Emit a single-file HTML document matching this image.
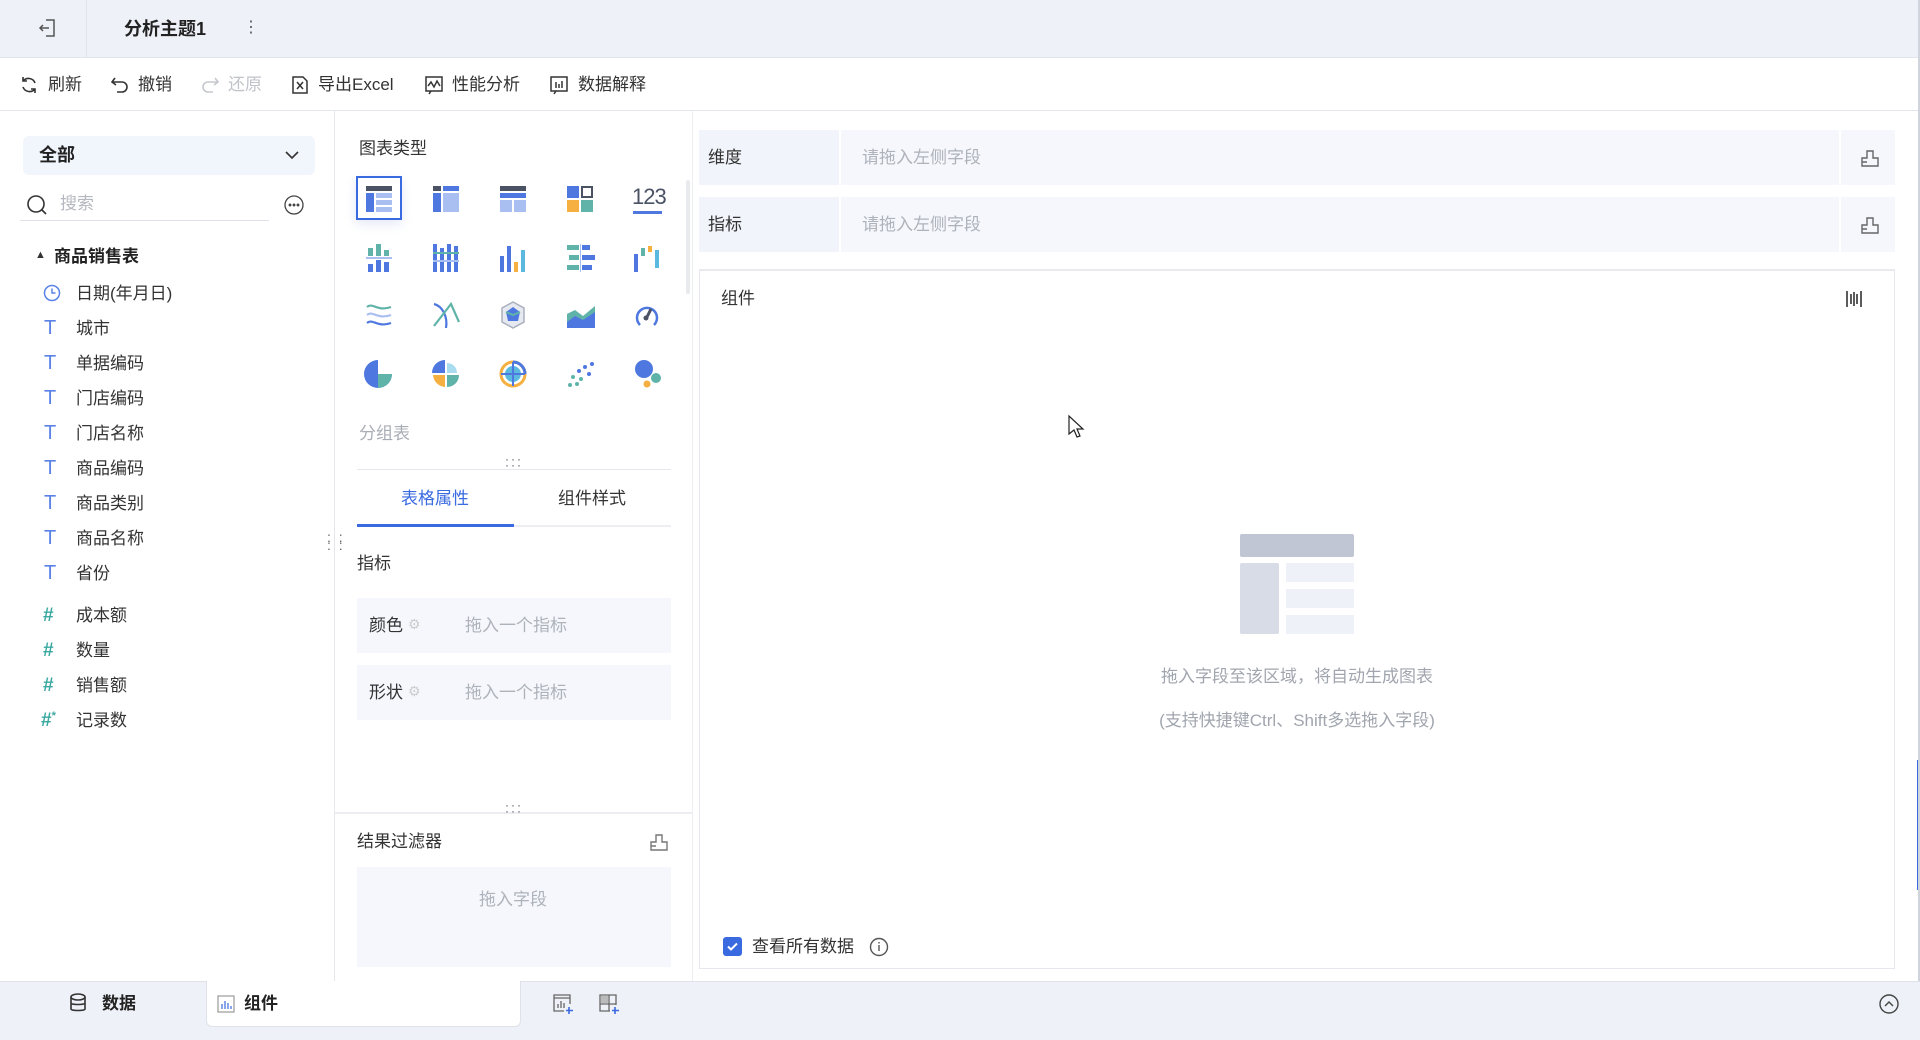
<!DOCTYPE html>
<html><head><meta charset="utf-8"><style>
*{margin:0;padding:0;box-sizing:border-box}
body{width:1920px;height:1040px;overflow:hidden;background:#fff;font-family:"Liberation Sans","Noto Sans CJK SC",sans-serif;color:#333;position:relative;font-size:17px}
.a{position:absolute}
.t{position:absolute;white-space:nowrap;line-height:1}
svg{position:absolute;overflow:visible}
</style></head><body>
<!-- top bar -->
<div class="a" style="left:0;top:0;width:1920px;height:58px;background:#eef1f8;border-bottom:1px solid #e2e5ec"></div>
<div class="a" style="left:86px;top:0;width:1px;height:58px;background:#e2e5ec"></div>
<svg style="left:38px;top:18px" width="20" height="20" viewBox="0 0 20 20" fill="none" stroke="#555" stroke-width="1.5"><path d="M8 2h8v16H8M11 10H2M5 7l-3 3 3 3"/></svg>
<div class="t" style="left:124px;top:20px;font-size:18px;font-weight:bold;color:#222">分析主题1</div>
<div class="t" style="left:243px;top:20px;font-size:16px;color:#555">⋮</div>
<!-- toolbar -->
<div class="a" style="left:0;top:110px;width:1920px;height:1px;background:#e3e6ec"></div>
<svg style="left:19px;top:75px" width="20" height="20" viewBox="0 0 20 20" fill="none" stroke="#333" stroke-width="1.6"><path d="M16 8A7 7 0 0 0 4 6M4 2v4h4M4 12a7 7 0 0 0 12 2M16 18v-4h-4"/></svg>
<div class="t" style="left:48px;top:76px;color:#333">刷新</div>
<svg style="left:110px;top:75px" width="20" height="20" viewBox="0 0 20 20" fill="none" stroke="#333" stroke-width="1.6"><path d="M5 3L2 7l4 3M2 7h10a5 5 0 0 1 0 10H7"/></svg>
<div class="t" style="left:138px;top:76px;color:#333">撤销</div>
<svg style="left:200px;top:75px" width="20" height="20" viewBox="0 0 20 20" fill="none" stroke="#c5c8ce" stroke-width="1.6"><path d="M15 3l3 4-4 3M18 7H8a5 5 0 0 0 0 10h5"/></svg>
<div class="t" style="left:228px;top:76px;color:#c0c3c9">还原</div>
<svg style="left:290px;top:75px" width="20" height="20" viewBox="0 0 20 20" fill="none" stroke="#333" stroke-width="1.5"><path d="M3 2h10l4 4v12H3zM7 7l6 7M13 7l-6 7"/></svg>
<div class="t" style="left:318px;top:76px;color:#333">导出Excel</div>
<svg style="left:424px;top:75px" width="20" height="20" viewBox="0 0 20 20" fill="none" stroke="#333" stroke-width="1.5"><path d="M2 2h16v14H2zM4 11l3-4 3 5 3-6 3 5M7 16l-2 3"/></svg>
<div class="t" style="left:452px;top:76px;color:#333">性能分析</div>
<svg style="left:549px;top:75px" width="20" height="20" viewBox="0 0 20 20" fill="none" stroke="#333" stroke-width="1.5"><path d="M2 2h16v14H2zM7 7v6M10 9v4M13 6v7M7 16l-2 3"/></svg>
<div class="t" style="left:578px;top:76px;color:#333">数据解释</div>

<!-- left panel -->
<div class="a" style="left:334px;top:111px;width:1px;height:870px;background:#e5e7ec"></div>
<div class="a" style="left:23px;top:136px;width:292px;height:39px;background:#f1f5fc;border-radius:6px"></div>
<div class="t" style="left:39px;top:146px;font-size:18px;font-weight:bold;color:#222">全部</div>
<svg style="left:284px;top:148px" width="16" height="14" viewBox="0 0 16 14" fill="none" stroke="#333" stroke-width="1.6"><path d="M2 4l6 6 6-6"/></svg>
<svg style="left:26px;top:194px" width="22" height="22" viewBox="0 0 22 22" fill="none" stroke="#333" stroke-width="1.6"><circle cx="10" cy="10" r="8"/><path d="M16 16l4 4"/></svg>
<div class="t" style="left:60px;top:195px;color:#b5b8bf">搜索</div>
<div class="a" style="left:20px;top:220px;width:249px;height:1px;background:#dfe2e8"></div>
<svg style="left:284px;top:195px" width="20" height="20" viewBox="0 0 20 20" fill="none" stroke="#444" stroke-width="1.3"><circle cx="10" cy="10" r="9"/><circle cx="6" cy="10" r=".8" fill="#444"/><circle cx="10" cy="10" r=".8" fill="#444"/><circle cx="14" cy="10" r=".8" fill="#444"/></svg>
<div class="t" style="left:35px;top:250px;font-size:11px;color:#333">▲</div>
<div class="t" style="left:54px;top:248px;font-weight:bold;color:#222">商品销售表</div>
<svg style="left:43px;top:284px" width="18" height="18" viewBox="0 0 18 18" fill="none" stroke="#5b82e6" stroke-width="1.5"><circle cx="9" cy="9" r="7.5"/><path d="M9 4.5V9h3.5"/></svg>
<div class="t" style="left:76px;top:285px;color:#333">日期(年月日)</div>
<div style="position:absolute;left:0;top:0;color:#333">
<div class="t" style="left:44px;top:318px;font-size:20px;color:#5b82e6">T</div><div class="t" style="left:76px;top:320px">城市</div>
<div class="t" style="left:44px;top:353px;font-size:20px;color:#5b82e6">T</div><div class="t" style="left:76px;top:355px">单据编码</div>
<div class="t" style="left:44px;top:388px;font-size:20px;color:#5b82e6">T</div><div class="t" style="left:76px;top:390px">门店编码</div>
<div class="t" style="left:44px;top:423px;font-size:20px;color:#5b82e6">T</div><div class="t" style="left:76px;top:425px">门店名称</div>
<div class="t" style="left:44px;top:458px;font-size:20px;color:#5b82e6">T</div><div class="t" style="left:76px;top:460px">商品编码</div>
<div class="t" style="left:44px;top:493px;font-size:20px;color:#5b82e6">T</div><div class="t" style="left:76px;top:495px">商品类别</div>
<div class="t" style="left:44px;top:528px;font-size:20px;color:#5b82e6">T</div><div class="t" style="left:76px;top:530px">商品名称</div>
<div class="t" style="left:44px;top:563px;font-size:20px;color:#5b82e6">T</div><div class="t" style="left:76px;top:565px">省份</div>
<div class="t" style="left:43px;top:606px;font-size:19px;font-weight:bold;color:#3aa8a0">#</div><div class="t" style="left:76px;top:607px">成本额</div>
<div class="t" style="left:43px;top:641px;font-size:19px;font-weight:bold;color:#3aa8a0">#</div><div class="t" style="left:76px;top:642px">数量</div>
<div class="t" style="left:43px;top:676px;font-size:19px;font-weight:bold;color:#3aa8a0">#</div><div class="t" style="left:76px;top:677px">销售额</div>
<div class="t" style="left:41px;top:711px;font-size:19px;font-weight:bold;color:#3aa8a0">#<span style="font-size:11px;vertical-align:top">*</span></div><div class="t" style="left:76px;top:712px">记录数</div>
</div>
<div class="t" style="left:327px;top:533px;font-size:14px;color:#666;letter-spacing:2px;line-height:.6">: :<br>: :</div>

<!-- middle -->
<div class="a" style="left:692px;top:111px;width:1px;height:870px;background:#eceef2"></div>
<div class="t" style="left:359px;top:140px;color:#333">图表类型</div>
<div class="a" style="left:356px;top:176px;width:46px;height:44px;border:2px solid #3a6ae0;box-shadow:0 4px 10px rgba(80,110,200,.15)"></div>
<div class="a" style="left:686px;top:180px;width:4px;height:114px;background:#e8eaee;border-radius:2px"></div>
<!-- row1 -->
<svg style="left:366px;top:186px" width="26" height="26" viewBox="0 0 26 26"><rect x="0" y="0" width="26" height="5" fill="#4a5264"/><rect x="0" y="7" width="8" height="19" fill="#4e78e0"/><rect x="10" y="7" width="16" height="5" fill="#a9bff2"/><rect x="10" y="14" width="16" height="5" fill="#a9bff2"/><rect x="10" y="21" width="16" height="5" fill="#a9bff2"/></svg>
<svg style="left:433px;top:186px" width="26" height="26" viewBox="0 0 26 26"><rect x="0" y="0" width="8" height="5" fill="#4a5264"/><rect x="10" y="0" width="16" height="5" fill="#4e78e0"/><rect x="0" y="7" width="8" height="19" fill="#4e78e0"/><rect x="10" y="7" width="16" height="19" fill="#a9bff2"/></svg>
<svg style="left:500px;top:186px" width="26" height="26" viewBox="0 0 26 26"><rect x="0" y="0" width="26" height="5" fill="#4a5264"/><rect x="0" y="7" width="26" height="5" fill="#4e78e0"/><rect x="0" y="14" width="12" height="12" fill="#a9bff2"/><rect x="14" y="14" width="12" height="12" fill="#a9bff2"/></svg>
<svg style="left:567px;top:186px" width="26" height="26" viewBox="0 0 26 26"><rect x="0" y="0" width="12" height="12" fill="#4e78e0"/><rect x="15" y="1" width="10" height="10" fill="none" stroke="#4a5264" stroke-width="2"/><rect x="0" y="14" width="12" height="12" fill="#f5b041"/><rect x="14" y="14" width="12" height="12" fill="#5fb3a8"/></svg>
<div class="t" style="left:632px;top:186px;font-size:22px;color:#4a5264;letter-spacing:-1px">123</div>
<div class="a" style="left:633px;top:211px;width:29px;height:3px;background:#4e78e0"></div>
<!-- row2 -->
<svg style="left:366px;top:244px" width="26" height="28" viewBox="0 0 26 28"><rect x="2" y="4" width="5" height="8" fill="#5fb3a8"/><rect x="10" y="0" width="5" height="12" fill="#5fb3a8"/><rect x="18" y="6" width="5" height="6" fill="#5fb3a8"/><rect x="0" y="13" width="26" height="2" fill="#a9bff2"/><rect x="2" y="20" width="5" height="8" fill="#4e78e0"/><rect x="10" y="16" width="5" height="12" fill="#4e78e0"/><rect x="18" y="18" width="5" height="10" fill="#4e78e0"/></svg>
<svg style="left:433px;top:244px" width="26" height="28" viewBox="0 0 26 28"><rect x="0" y="0" width="4" height="28" fill="#4e78e0"/><rect x="7" y="4" width="4" height="24" fill="#4e78e0"/><rect x="14" y="0" width="4" height="28" fill="#4e78e0"/><rect x="21" y="2" width="4" height="26" fill="#4e78e0"/><rect x="0" y="8" width="26" height="2" fill="#5fb3a8"/><rect x="0" y="16" width="26" height="2" fill="#a9bff2"/></svg>
<svg style="left:500px;top:244px" width="26" height="28" viewBox="0 0 26 28"><rect x="0" y="12" width="4" height="16" fill="#4e78e0"/><rect x="7" y="2" width="4" height="26" fill="#4e78e0"/><rect x="14" y="18" width="4" height="10" fill="#f5b041"/><rect x="21" y="6" width="4" height="22" fill="#5bb9e0"/></svg>
<svg style="left:567px;top:244px" width="28" height="28" viewBox="0 0 28 28"><rect x="0" y="1" width="12" height="5" fill="#5fb3a8"/><rect x="15" y="1" width="8" height="5" fill="#4e78e0"/><rect x="2" y="11" width="10" height="5" fill="#5fb3a8"/><rect x="15" y="11" width="13" height="5" fill="#4e78e0"/><rect x="0" y="21" width="12" height="5" fill="#5fb3a8"/><rect x="15" y="21" width="10" height="5" fill="#4e78e0"/><rect x="13" y="0" width="1" height="28" fill="#a9bff2"/></svg>
<svg style="left:634px;top:246px" width="26" height="26" viewBox="0 0 26 26"><rect x="0" y="8" width="4" height="18" fill="#4e78e0"/><rect x="7" y="2" width="4" height="8" fill="#5fb3a8"/><rect x="14" y="0" width="4" height="6" fill="#f5b041"/><rect x="21" y="4" width="4" height="18" fill="#5bb9e0"/></svg>
<!-- row3 -->
<svg style="left:366px;top:302px" width="26" height="26" viewBox="0 0 26 26" fill="none" stroke-width="2.2"><path d="M1 5c6-5 10 5 24 0" stroke="#5fb3a8"/><path d="M1 13c6-5 10 5 24 0" stroke="#a9bff2"/><path d="M1 21c6-5 10 5 24 0" stroke="#4e78e0"/></svg>
<svg style="left:433px;top:302px" width="28" height="26" viewBox="0 0 28 26" fill="none" stroke-width="2.2"><path d="M1 2c8 2 14 12 12 24" stroke="#4e78e0"/><path d="M1 24L18 2l8 18" stroke="#5fb3a8"/></svg>
<svg style="left:500px;top:301px" width="26" height="28" viewBox="0 0 26 28"><path d="M13 1l11 6v14l-11 6L2 21V7z" fill="#e6e9f0" stroke="#aab0bd" stroke-width="1.5"/><path d="M13 6l7 5-2 9H8L6 11z" fill="#4e78e0"/><path d="M6 11l7 3 7-3" stroke="#5fb3a8" stroke-width="2" fill="none"/></svg>
<svg style="left:567px;top:302px" width="28" height="26" viewBox="0 0 28 26"><path d="M0 12l8-4 8 6 12-10v22H0z" fill="#5fb3a8"/><path d="M0 20l8-6 8 4 12-8v16H0z" fill="#4e78e0"/></svg>
<svg style="left:634px;top:302px" width="26" height="26" viewBox="0 0 26 26" fill="none"><path d="M6 23A10 10 0 1 1 20 23" stroke="#4e78e0" stroke-width="2.5"/><path d="M17 7l-4 8" stroke="#4a5264" stroke-width="3"/><circle cx="12" cy="16" r="2.5" fill="#4a5264"/></svg>
<!-- row4 -->
<svg style="left:364px;top:360px" width="28" height="28" viewBox="0 0 28 28"><path d="M14 14V0A14 14 0 1 0 28 14z" fill="#4e78e0"/><path d="M14 14H28A14 14 0 0 1 14 28z" fill="#5fb3a8"/></svg>
<svg style="left:432px;top:360px" width="28" height="28" viewBox="0 0 28 28"><path d="M13 13V0A13 13 0 0 0 0 13z" fill="#4e78e0"/><path d="M15 13V3A10 10 0 0 1 25 13z" fill="#a9dcef"/><path d="M13 15v12A13 13 0 0 1 1 15z" fill="#f5b041"/><path d="M15 15h12A12 12 0 0 1 15 27z" fill="#5fb3a8"/></svg>
<svg style="left:499px;top:360px" width="28" height="28" viewBox="0 0 28 28" fill="none"><circle cx="14" cy="14" r="12" stroke="#f5b041" stroke-width="3"/><circle cx="14" cy="14" r="8" fill="#5bb9e0"/><path d="M14 2v24M2 14h24" stroke="#4e78e0" stroke-width="2"/><path d="M14 2A12 12 0 0 1 26 14" stroke="#4e78e0" stroke-width="3"/></svg>
<svg style="left:567px;top:362px" width="28" height="26" viewBox="0 0 28 26"><circle cx="25" cy="2" r="2" fill="#4e78e0"/><circle cx="18" cy="5" r="2" fill="#4e78e0"/><circle cx="12" cy="9" r="2" fill="#4e78e0"/><circle cx="22" cy="12" r="2" fill="#4e78e0"/><circle cx="14" cy="17" r="2" fill="#5fb3a8"/><circle cx="6" cy="15" r="2" fill="#5fb3a8"/><circle cx="3" cy="23" r="2" fill="#5fb3a8"/><circle cx="10" cy="22" r="2" fill="#5fb3a8"/></svg>
<svg style="left:634px;top:360px" width="28" height="30" viewBox="0 0 28 30"><circle cx="10" cy="9" r="9" fill="#4e78e0"/><circle cx="22" cy="18" r="5" fill="#5fb3a8"/><circle cx="13" cy="24" r="3.5" fill="#f5b041"/></svg>

<div class="t" style="left:359px;top:425px;color:#a9adb5">分组表</div>
<div class="t" style="left:505px;top:456px;font-size:12px;color:#555;letter-spacing:2px;line-height:.5">···<br>···</div>
<div class="a" style="left:357px;top:469px;width:314px;height:1px;background:#e5e7ec"></div>
<div class="t" style="left:401px;top:490px;color:#3a6ae0">表格属性</div>
<div class="t" style="left:558px;top:490px;color:#333">组件样式</div>
<div class="a" style="left:357px;top:525px;width:314px;height:2px;background:#eceef2"></div>
<div class="a" style="left:357px;top:524px;width:157px;height:3px;background:#3a6ae0"></div>
<div class="t" style="left:357px;top:555px;color:#333">指标</div>
<div class="a" style="left:357px;top:598px;width:314px;height:55px;background:#f5f7fc"></div>
<div class="t" style="left:369px;top:617px;color:#333">颜色</div>
<div class="t" style="left:408px;top:617px;font-size:14px;color:#ccc">⚙</div>
<div class="t" style="left:465px;top:617px;color:#aeb2ba">拖入一个指标</div>
<div class="a" style="left:357px;top:665px;width:314px;height:55px;background:#f5f7fc"></div>
<div class="t" style="left:369px;top:684px;color:#333">形状</div>
<div class="t" style="left:408px;top:684px;font-size:14px;color:#ccc">⚙</div>
<div class="t" style="left:465px;top:684px;color:#aeb2ba">拖入一个指标</div>
<div class="a" style="left:335px;top:812px;width:357px;height:2px;background:#eceef2"></div>
<div class="t" style="left:505px;top:802px;font-size:12px;color:#555;letter-spacing:2px;line-height:.5">···<br>···</div>
<div class="t" style="left:357px;top:833px;color:#333">结果过滤器</div>
<svg style="left:649px;top:832px" width="20" height="20" viewBox="0 0 20 20" fill="none" stroke="#777" stroke-width="1.4"><path d="M2 18V10h5V3h6v7h5v8zM2 14h5"/></svg>
<div class="a" style="left:357px;top:867px;width:314px;height:100px;background:#f5f7fc"></div>
<div class="t" style="left:479px;top:891px;color:#aeb2ba">拖入字段</div>

<!-- right -->
<div class="a" style="left:699px;top:130px;width:1196px;height:55px;background:#f5f7fc"></div>
<div class="a" style="left:699px;top:130px;width:140px;height:55px;background:#f1f4fa"></div>
<div class="a" style="left:839px;top:130px;width:2px;height:55px;background:#fff"></div>
<div class="a" style="left:1839px;top:130px;width:2px;height:55px;background:#fff"></div>
<div class="t" style="left:708px;top:149px;color:#333">维度</div>
<div class="t" style="left:862px;top:149px;color:#aeb2ba">请拖入左侧字段</div>
<svg style="left:1860px;top:148px" width="20" height="20" viewBox="0 0 20 20" fill="none" stroke="#666" stroke-width="1.4"><path d="M2 18V10h5V3h6v7h5v8zM2 14h5"/></svg>
<div class="a" style="left:699px;top:197px;width:1196px;height:55px;background:#f5f7fc"></div>
<div class="a" style="left:699px;top:197px;width:140px;height:55px;background:#f1f4fa"></div>
<div class="a" style="left:839px;top:197px;width:2px;height:55px;background:#fff"></div>
<div class="a" style="left:1839px;top:197px;width:2px;height:55px;background:#fff"></div>
<div class="t" style="left:708px;top:216px;color:#333">指标</div>
<div class="t" style="left:862px;top:216px;color:#aeb2ba">请拖入左侧字段</div>
<svg style="left:1860px;top:215px" width="20" height="20" viewBox="0 0 20 20" fill="none" stroke="#666" stroke-width="1.4"><path d="M2 18V10h5V3h6v7h5v8zM2 14h5"/></svg>
<div class="a" style="left:699px;top:269px;width:1196px;height:700px;border:1px solid #e5e7ec;border-top:2px solid #e8eaee"></div>
<div class="t" style="left:721px;top:290px;color:#333">组件</div>
<svg style="left:1845px;top:290px" width="18" height="18" viewBox="0 0 18 18" stroke="#333" stroke-width="1.6"><path d="M2 1v16M6 4v10M9 2v14M12 4v10M16 1v16"/></svg>
<!-- illustration -->
<div class="a" style="left:1240px;top:534px;width:114px;height:23px;background:#c0c6d3;border-radius:2px"></div>
<div class="a" style="left:1240px;top:563px;width:39px;height:71px;background:#d8dce6;border-radius:2px"></div>
<div class="a" style="left:1286px;top:563px;width:68px;height:19px;background:#eef1f7"></div>
<div class="a" style="left:1286px;top:589px;width:68px;height:19px;background:#eef1f7"></div>
<div class="a" style="left:1286px;top:615px;width:68px;height:19px;background:#eef1f7"></div>
<div class="t" style="left:1297px;top:668px;transform:translateX(-50%);color:#a0a5ae">拖入字段至该区域，将自动生成图表</div>
<div class="t" style="left:1297px;top:712px;transform:translateX(-50%);color:#a0a5ae">(支持快捷键Ctrl、Shift多选拖入字段)</div>
<div class="a" style="left:723px;top:937px;width:19px;height:19px;background:#3a6ae0;border-radius:3px"></div>
<svg style="left:726px;top:940px" width="13" height="13" viewBox="0 0 13 13" fill="none" stroke="#fff" stroke-width="2"><path d="M2 6.5l3 3 6-6"/></svg>
<div class="t" style="left:752px;top:938px;color:#333">查看所有数据</div>
<svg style="left:869px;top:937px" width="20" height="20" viewBox="0 0 20 20" fill="none" stroke="#555" stroke-width="1.4"><circle cx="10" cy="10" r="8.5"/><path d="M10 8v6M10 5v1.5"/></svg>
<svg style="left:1068px;top:415px" width="16" height="24" viewBox="0 0 16 24"><path d="M1 1v18l5-4 3 7 3-1-3-7h6z" fill="#fff" stroke="#222" stroke-width="1.2"/></svg>
<div class="a" style="left:1917px;top:760px;width:3px;height:130px;background:#3a6ae0"></div>
<div class="a" style="left:1918px;top:0;width:2px;height:1040px;background:#d0d4dc"></div>

<!-- bottom -->
<div class="a" style="left:0;top:981px;width:1920px;height:59px;background:#eef1f8;border-top:1px solid #dfe2e8"></div>
<div class="a" style="left:206px;top:981px;width:315px;height:46px;background:#fff;border:1px solid #dfe2e8;border-top:none;border-radius:0 0 6px 6px"></div>
<svg style="left:69px;top:993px" width="18" height="20" viewBox="0 0 18 20" fill="none" stroke="#333" stroke-width="1.6"><ellipse cx="9" cy="4" rx="7" ry="3"/><path d="M2 4v12c0 2 14 2 14 0V4M2 10c0 2 14 2 14 0"/></svg>
<div class="t" style="left:102px;top:995px;font-weight:bold;color:#222">数据</div>
<svg style="left:217px;top:995px" width="18" height="18" viewBox="0 0 18 18" fill="none" stroke="#3a6ae0" stroke-width="1.2"><rect x="1" y="1" width="16" height="16" stroke="#999"/><path d="M5 14V9M8 14V6M11 14V8M14 14v-3"/></svg>
<div class="t" style="left:244px;top:995px;font-weight:bold;color:#222">组件</div>
<svg style="left:552px;top:993px" width="22" height="22" viewBox="0 0 22 22" fill="none" stroke="#666" stroke-width="1.3"><path d="M18 11V2H2v16h10M2 5h16M6 15v-4M9 15V8M12 15v-5"/><path d="M17 14v7M14 17.5h7" stroke="#3a6ae0" stroke-width="1.6"/></svg>
<svg style="left:598px;top:993px" width="22" height="22" viewBox="0 0 22 22" fill="none" stroke="#666" stroke-width="1.3"><path d="M18 12V2H2v16h10M11 2v16M2 11h16"/><rect x="3" y="3" width="7" height="7" fill="#bbb" stroke="none"/><path d="M17 14v7M14 17.5h7" stroke="#3a6ae0" stroke-width="1.6"/></svg>
<svg style="left:1879px;top:994px" width="20" height="20" viewBox="0 0 20 20" fill="none" stroke="#444" stroke-width="1.4"><circle cx="10" cy="10" r="9"/><path d="M6 12l4-4 4 4"/></svg>
</body></html>
